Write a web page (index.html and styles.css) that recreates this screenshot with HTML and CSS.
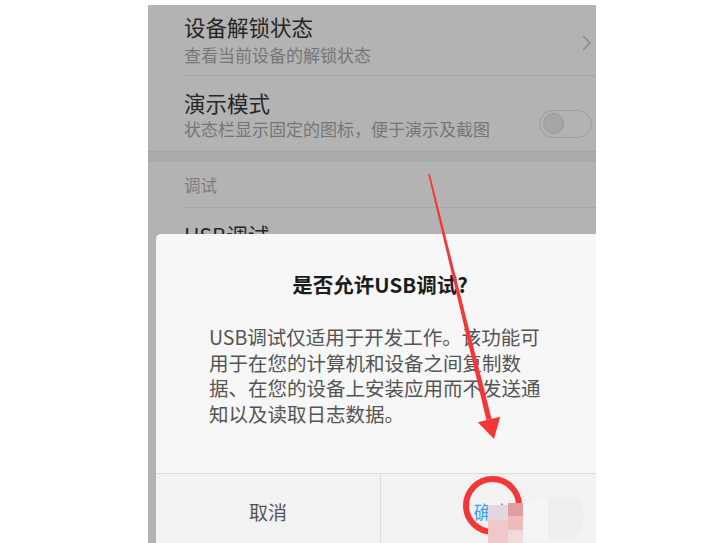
FILE: index.html
```html
<!DOCTYPE html>
<html lang="zh-CN">
<head>
  <meta charset="UTF-8">
  <title>USB调试</title>
  <link rel="stylesheet" href="styles.css">
</head>
<body>

  <div class="phone">
    <!-- settings list (dimmed) -->
    <div class="list">
      <div class="item first">
        <div class="item-text">
          <div class="item-title">设备解锁状态</div>
          <div class="item-sub">查看当前设备的解锁状态</div>
        </div>
        <svg class="chevron" width="9" height="16" viewBox="0 0 9 16">
          <polyline points="1,1 8,8 1,15" fill="none" stroke="#878787" stroke-width="1.4"/>
        </svg>
      </div>

      <div class="item last">
        <div class="item-text">
          <div class="item-title">演示模式</div>
          <div class="item-sub">状态栏显示固定的图标，便于演示及截图</div>
        </div>
        <div class="toggle"><span class="knob"></span></div>
      </div>

      <div class="band"></div>
      <div class="section-head">调试</div>

      <div class="item">
        <div class="item-text">
          <div class="item-title">USB调试</div>
          <div class="item-sub">连接USB后启用调试模式</div>
        </div>
        <div class="toggle"><span class="knob"></span></div>
      </div>
    </div>

    <!-- bottom sheet dialog -->
    <div class="dialog">
      <div class="dialog-title">是否允许USB调试?</div>
      <div class="dialog-body">USB调试仅适用于开发工作。该功能可用于在您的计算机和设备之间复制数据、在您的设备上安装应用而不发送通知以及读取日志数据。</div>
      <div class="dialog-buttons">
        <div class="btn">取消</div>
        <div class="btn ok">确定</div>
      </div>
    </div>
  </div>

  <!-- annotation: arrow + circle -->
  <svg class="marks" width="713" height="543" viewBox="0 0 713 543">
    <polygon fill="#f63636" points="429.8,173.8 491.6,418.9 486.4,420.1 428.2,174.2"/>
    <polygon fill="#f63636" points="500.2,416.8 494,439 477.8,422.2"/>
    <circle cx="492.5" cy="505.5" r="26.5" fill="none" stroke="#f63636" stroke-width="6"/>
  </svg>

  <!-- mosaic blur over the button -->
  <div class="mosaic">
    <span class="m m1"></span>
    <span class="m m2"></span>
    <span class="m m3"></span>
    <span class="m m4"></span>
    <span class="m m5"></span>
    <span class="m m6"></span>
    <span class="m m7"></span>
  </div>

</body>
</html>
```

FILE: styles.css
```css
body {
  margin: 0;
  background: #fff;
  font-family: "Noto Sans CJK SC", "Noto Sans", sans-serif;
  width: 713px;
  height: 543px;
  overflow: hidden;
  position: relative;
}

.phone {
  position: relative;
  margin: 5px 0 0 148px;
  width: 448px;
  height: 538px;
  overflow: hidden;
  background: #b3b3b3;
}

/* list */
.item {
  display: flex;
  justify-content: space-between;
  margin-left: 36px;
  padding: 13px 4px 10px 0;
  border-bottom: 1px solid #a7a7a7;
}
.item.first {
  padding-top: 8px;
  padding-bottom: 8px;
}
.item.last {
  border-bottom: none;
}
.item-title {
  font-size: 21.5px;
  line-height: 27px;
  color: #262626;
}
.item-sub {
  font-size: 17px;
  line-height: 25px;
  color: #767676;
}
.item.first .item-sub {
  margin-top: 2px;
}
.chevron {
  margin-top: 22px;
  margin-right: 1px;
}

.toggle {
  width: 51px;
  height: 26px;
  margin-top: 21px;
  border: 1px solid #9d9d9d;
  border-radius: 14px;
  position: relative;
}
.knob {
  position: absolute;
  left: 3px;
  top: 2px;
  width: 21px;
  height: 21px;
  border-radius: 50%;
  background: #a6a6a6;
  border: 1px solid #989898;
  box-sizing: border-box;
}

.band {
  height: 10px;
  background: #aaaaaa;
  border-top: 1px solid #a3a3a3;
}
.section-head {
  margin-left: 36px;
  height: 45px;
  line-height: 46px;
  font-size: 16.5px;
  color: #7b7b7b;
  border-bottom: 1px solid #a7a7a7;
}

/* dialog */
.dialog {
  position: absolute;
  left: 8px;
  top: 229px;
  width: 448px;
  height: 330px;
  background: #f7f7f7;
  border-radius: 5px 5px 0 0;
}
.dialog-title {
  padding-top: 36px;
  text-align: center;
  font-size: 20.5px;
  line-height: 28px;
  font-weight: bold;
  color: #1c1c1c;
}
.dialog-body {
  margin: 26px 53px 47px;
  font-size: 19.5px;
  line-height: 25.5px;
  color: #545454;
}
.dialog-buttons {
  display: grid;
  grid-template-columns: 1fr 1fr;
  border-top: 1px solid #dcdcdc;
  background: #f2f2f2;
}
.btn {
  text-align: center;
  line-height: 76px;
  font-size: 19px;
  color: #555;
}
.btn.ok {
  color: #3ba2ef;
  border-left: 1px solid #dcdcdc;
}

/* annotations */
.marks {
  position: absolute;
  left: 0;
  top: 0;
}

.mosaic {
  position: absolute;
  left: 488px;
  top: 495px;
  width: 95px;
  height: 48px;
}
.m {
  position: absolute;
  display: block;
}
.m1 { left: 0; top: 10px; width: 20px; height: 15px; background: #e4d8e0; }
.m2 { left: 20px; top: 8px; width: 15px; height: 13px; background: #e09ea2; }
.m3 { left: 20px; top: 21px; width: 15px; height: 14px; background: #eebcbd; }
.m4 { left: 0; top: 25px; width: 20px; height: 23px; background: #f1c7c9; }
.m5 { left: 20px; top: 35px; width: 15px; height: 13px; background: #f0dada; }
.m6 { left: 35px; top: 4px; width: 25px; height: 40px; background: #f5f5f5; border-radius: 10px 0 0 10px; }
.m7 { left: 60px; top: 2px; width: 35px; height: 42px; background: #eeeeee; border-radius: 0 16px 16px 0; }
```
